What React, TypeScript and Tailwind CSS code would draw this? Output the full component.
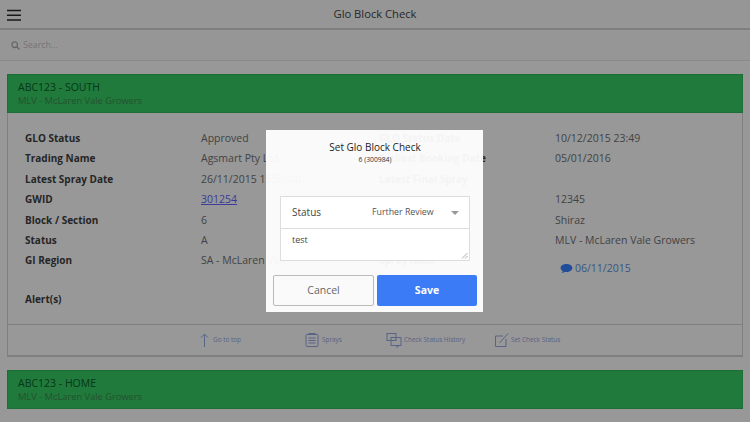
import { Fragment } from "react";

const leftRows = [
  ["GLO Status", "Approved"],
  ["Trading Name", "Agsmart Pty Ltd"],
  ["Latest Spray Date", "26/11/2015 15:50:00"],
  ["GWID", "301254"],
  ["Block / Section", "6"],
  ["Status", "A"],
  ["GI Region", "SA - McLaren Vale"],
];

// labels of the middle rows sit behind the modal's form box
const rightRows = [
  ["GLO Status Date", "10/12/2015 23:49"],
  ["Earliest Booking Date", "05/01/2016"],
  ["Latest Final Spray", ""],
  ["", "12345"],
  ["", "Shiraz"],
  ["", "MLV - McLaren Vale Growers"],
];

function CardHeader({ title }: { title: string }) {
  return (
    <div className="h-[39px] bg-[#35cb64] border border-[#2fb85a] pl-[10px] pt-[4px]">
      <div className="text-[10.5px] leading-[16px] text-[#0d5c2a]">{title}</div>
      <div className="-mt-[1px] text-[9.3px] leading-[14px] text-[#3f8a50]">
        MLV - McLaren Vale Growers
      </div>
    </div>
  );
}

function FooterLink({
  label,
  width,
  children,
}: {
  label: string;
  width: string;
  children: React.ReactNode;
}) {
  return (
    <div className={`flex items-center gap-[2px] ${width}`}>
      <svg
        width="16"
        height="16"
        viewBox="0 0 16 16"
        fill="none"
        stroke="#96a7e1"
        strokeWidth="1"
        className="shrink-0"
      >
        {children}
      </svg>
      <span className="text-[6.4px] text-[#96a7e1]">{label}</span>
    </div>
  );
}

function SetCheckModal() {
  return (
    <div className="absolute inset-0 z-10 flex items-start justify-center bg-black/40">
      <div className="-ml-[1px] mt-[130px] h-[182px] w-[217px] bg-white/95 pl-[7px] pr-[6px] pt-[10px]">
        <div className="text-center text-[10px] leading-[14px] text-[#222]">
          Set Glo Block Check
        </div>
        <div className="mt-[1px] text-center text-[6.8px] leading-[10px] text-[#333]">
          6 (300984)
        </div>
        <div className="ml-[7px] mr-[7px] mt-[31px] h-[65px] border border-[#ddd] bg-white">
          <div className="flex h-[32px] items-center border-b border-[#ddd] pl-[11px] pr-[10px]">
            <span className="w-[80px] text-[10px] text-[#444]">Status</span>
            <span className="flex-1 text-[8.8px] text-[#555]">Further Review</span>
            <span className="h-0 w-0 border-x-[4px] border-t-[4px] border-x-transparent border-t-[#999]" />
          </div>
          <div className="relative h-[31px] pl-[11px] pt-[4px] text-[9px] leading-[14px] text-[#444]">
            test
            <svg
              width="7"
              height="7"
              viewBox="0 0 7 7"
              stroke="#888"
              strokeWidth="0.7"
              className="absolute bottom-[1px] right-[1px]"
            >
              <path d="M1 6.5 L6.5 1 M4 6.5 L6.5 4" />
            </svg>
          </div>
        </div>
        <div className="mt-[14px] flex gap-[3px]">
          <button className="h-[31px] w-[101px] flex-none rounded-[2px] border border-[#bbb] bg-[#fafafa] text-[10.5px] text-[#666]">
            Cancel
          </button>
          <button className="h-[31px] w-[100px] flex-none rounded-[2px] bg-[#3b7cf6] text-[10.5px] font-bold text-white">
            Save
          </button>
        </div>
      </div>
    </div>
  );
}

export default function App() {
  return (
    <div className="relative h-[422px] w-[750px] overflow-hidden bg-[#fdfdfd] font-['Open_Sans',sans-serif]">
      <div className="relative flex h-[30px] items-center justify-center border-b-2 border-[#d4d4d4] bg-[#fafafa]">
        <svg
          width="14"
          height="12"
          viewBox="0 0 14 12"
          stroke="#2a2a2a"
          strokeWidth="1.4"
          className="absolute left-[7px] top-[9px]"
        >
          <path d="M0 1.5h14M0 6.2h14M0 11h14" />
        </svg>
        <span className="text-[11.2px] font-medium text-[#444]">Glo Block Check</span>
      </div>
      <div className="flex h-[31px] items-center gap-[3px] border-b border-[#e6e6e6] bg-[#fbfbfb] pl-[11px] pt-[1px]">
        <svg width="9" height="9" viewBox="0 0 9 9" fill="none" stroke="#aaa" strokeWidth="1.3">
          <circle cx="3.7" cy="3.7" r="2.8" />
          <path d="M5.8 5.8 L8.5 8.5" />
        </svg>
        <span className="text-[8.8px] text-[#c4c4c4]">Search...</span>
      </div>

      <div className="px-[7px] pt-[13px]">
        <CardHeader title="ABC123 - SOUTH" />
        <div className="h-[244px] border-x border-b-2 border-[#d4d4d4]">
          <div className="grid h-[211px] grid-cols-[354px_1fr] content-start pl-[17px] pt-[15px] text-[10.5px] leading-[20.4px]">
            <div className="grid grid-cols-[176px_1fr] content-start">
              {leftRows.map(([label, value]) => (
                <Fragment key={label}>
                  <span className="text-[10px] font-bold text-[#3f3f3f]">{label}</span>
                  {label === "GWID" ? (
                    <span className="text-[#6464ff] underline">{value}</span>
                  ) : (
                    <span className="text-[#707070]">{value}</span>
                  )}
                </Fragment>
              ))}
              <span className="mt-[18px] text-[10px] font-bold text-[#3f3f3f]">Alert(s)</span>
            </div>
            <div className="grid grid-cols-[176px_1fr] content-start">
              {rightRows.map(([label, value]) => (
                <Fragment key={value}>
                  <span className="text-[10px] font-bold text-[#3f3f3f]">{label}</span>
                  <span className="min-h-[20.4px] text-[#707070]">{value}</span>
                </Fragment>
              ))}
              <span className="text-[10px] font-bold text-[#3f3f3f]">Spray Note</span>
              <span className="mt-[8px] flex items-center gap-[2px] pl-[5px] text-[#6090e0]">
                <svg width="13" height="11" viewBox="0 0 13 11" fill="#3480ff">
                  <path d="M6.5 1C3.2 1 .6 2.7.6 4.9c0 1.3.9 2.4 2.2 3.1-.2.9-.7 1.6-1.2 2 1.2-.1 2.4-.6 3.2-1.3.5.1 1.1.2 1.7.2 3.3 0 5.9-1.8 5.9-4S9.8 1 6.5 1Z" />
                </svg>
                06/11/2015
              </span>
            </div>
          </div>
          <div className="flex h-[31px] items-center border-t border-[#d4d4d4] pl-[187px]">
            <FooterLink label="Go to top" width="w-[109px]">
              <path d="M9.5 15V2M6 5.5 9.5 2 13 5.5" />
            </FooterLink>
            <FooterLink label="Sprays" width="w-[82px]">
              <rect x="2" y="2.5" width="12" height="12" rx="1" />
              <path d="M4.5 1.5h7M4.5 6h7M4.5 8.5h7M4.5 11h7" />
            </FooterLink>
            <FooterLink label="Check Status History" width="w-[107px]">
              <rect x="1" y="1.5" width="9" height="7" />
              <rect x="5" y="5.5" width="10" height="8" />
              <path d="M11 13.5v2l2-2" />
            </FooterLink>
            <FooterLink label="Set Check Status" width="w-[90px]">
              <path d="M13 7v7.5H2.5V4H10" />
              <path d="M6.5 11 15 1.5" />
            </FooterLink>
          </div>
        </div>
        <div className="mt-[13px]">
          <CardHeader title="ABC123 - HOME" />
        </div>
      </div>

      <SetCheckModal />
    </div>
  );
}
